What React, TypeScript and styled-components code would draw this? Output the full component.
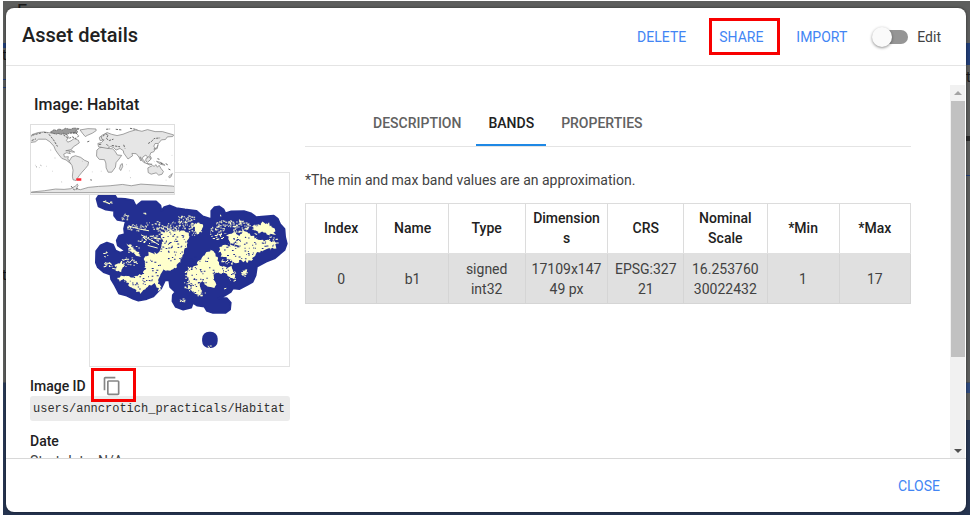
import React, { useState } from "react";
import styled, { createGlobalStyle } from "styled-components";

const GlobalStyle = createGlobalStyle`
  *, *::before, *::after { box-sizing: border-box; }
  html, body, #root { height: 100%; }
  body {
    margin: 0;
    background: #fff;
    color: #424242;
    font-family: Roboto, "Liberation Sans", sans-serif;
    font-size: 14px;
    line-height: 20px;
    overflow: hidden;
  }
  button { font-family: inherit; }
`;

const Backdrop = styled.div`
  position: relative;
  height: calc(100% - 1px);
  margin: 1px 0 0 3px;
  padding: 7px 4px 3px 3px;
  overflow: hidden;
  background: linear-gradient(#5d5e5d 0, #5d5e5d 381px, #2b3c58 382px, #263450 100%);
`;

const Behind = styled.span<{ $x: string; $y: number; $color?: string; $size?: number }>`
  position: absolute;
  left: ${(p) => p.$x};
  top: ${(p) => p.$y}px;
  color: ${(p) => p.$color || "#181818"};
  font-size: ${(p) => p.$size || 14}px;
  line-height: 16px;
  white-space: nowrap;
`;

const BehindBar = styled.span<{ $side: "left" | "right"; $y: number; $h: number; $color?: string }>`
  position: absolute;
  ${(p) => p.$side}: 0;
  top: ${(p) => p.$y}px;
  width: 4px;
  height: ${(p) => p.$h}px;
  background: ${(p) => p.$color || "#233f78"};
`;

const Dialog = styled.section`
  position: relative;
  display: flex;
  flex-direction: column;
  height: 100%;
  overflow: hidden;
  background: #fff;
  border-radius: 8px;
  box-shadow: 0 0 3px rgba(0, 0, 0, 0.5);
`;

const Header = styled.header`
  display: flex;
  align-items: center;
  justify-content: space-between;
  flex: none;
  height: 58px;
  padding: 0 25px 0 16px;
  border-bottom: 1px solid #e4e4e4;
`;

const Title = styled.h1`
  margin: 0;
  padding-bottom: 3px;
  color: #212121;
  font-size: 20px;
  font-weight: 500;
  line-height: 28px;
`;

const Actions = styled.div`
  display: flex;
  align-items: center;
  gap: 15px;
`;

const TextButton = styled.button<{ $marked?: boolean }>`
  position: relative;
  padding: 8px 9px;
  border: 0;
  background: none;
  color: #4285f4;
  font-size: 14px;
  line-height: 20px;
  cursor: pointer;
  ${(p) =>
    p.$marked &&
    `&::after {
      content: "";
      position: absolute;
      inset: -1px -8px 0 -1px;
      border: 3px solid #f80000;
    }`}
`;

const SwitchLabel = styled.label`
  display: flex;
  align-items: center;
  gap: 9px;
  margin-left: 1px;
  cursor: pointer;
`;

const Switch = styled.input`
  appearance: none;
  position: relative;
  width: 36px;
  height: 20px;
  margin: 0;
  cursor: pointer;
  &::before {
    content: "";
    position: absolute;
    inset: 3px 0 3px 2px;
    border-radius: 7px;
    background: #959595;
  }
  &::after {
    content: "";
    position: absolute;
    top: 0;
    left: 0;
    width: 20px;
    height: 20px;
    border-radius: 50%;
    background: #fafafa;
    box-shadow: 0 1px 3px rgba(0, 0, 0, 0.45);
  }
  &:checked::before { background: #8ab4f8; }
  &:checked::after { left: 16px; background: #4285f4; }
`;

const Body = styled.div`
  display: flex;
  flex: 1;
  min-height: 0;
  padding-top: 19px;
`;

const Content = styled.div`
  display: grid;
  grid-template-columns: 260px minmax(0, 1fr);
  gap: 15px;
  flex: 1;
  min-width: 0;
  padding: 0 39px 0 24px;
  overflow-y: auto;
  scrollbar-width: none;
`;

const Scrollbar = styled.div`
  display: flex;
  flex-direction: column;
  align-items: center;
  flex: none;
  width: 15px;
  margin-right: 1px;
  background: #f1f1f1;
`;

const ScrollTrack = styled.div`
  flex: 1;
  align-self: stretch;
  padding: 0 0 0 1px;
`;

const ScrollThumb = styled.div`
  height: 75%;
  background: #c1c1c1;
`;

const ScrollArrow = styled.svg`
  display: block;
  flex: none;
  width: 15px;
  height: 16px;
`;

const AssetName = styled.h2`
  margin: 0;
  padding: 10px 4px 9px;
  color: #212121;
  font-size: 16px;
  font-weight: 500;
  line-height: 20px;
`;

const Thumbnails = styled.div`
  display: grid;
  grid-template-columns: 60px 85px 1fr;
  grid-template-rows: 48px 23px auto;
`;

const WorldFrame = styled.div`
  grid-area: 1 / 1 / 3 / 3;
  z-index: 1;
  border: 1px solid #dedede;
  background: #fff;
  svg { display: block; width: 100%; height: 100%; }
`;

const HabitatFrame = styled.div`
  grid-area: 2 / 2 / 4 / 4;
  height: 195px;
  border: 1px solid #e2e2e2;
  margin-left: -1px;
  svg { display: block; width: 100%; height: 100%; }
`;

const FieldHead = styled.div`
  display: flex;
  align-items: center;
  gap: 16px;
  height: 29px;
  padding-top: 8px;
`;

const FieldTitle = styled.h3`
  margin: 0;
  color: #212121;
  font-size: 14px;
  font-weight: 500;
  line-height: 20px;
`;

const CopyButton = styled.button`
  position: relative;
  width: 20px;
  height: 20px;
  padding: 0;
  border: 0;
  background: none;
  cursor: pointer;
  svg { display: block; }
  &::after {
    content: "";
    position: absolute;
    inset: -8px -14px -6px -11px;
    border: 3px solid #f80000;
  }
`;

const AssetId = styled.code`
  display: block;
  margin-bottom: 10px;
  padding: 3px 3px 2px;
  border-radius: 3px;
  background: #ebebeb;
  color: #303030;
  font-family: "Liberation Mono", monospace;
  font-size: 12px;
  line-height: 20px;
  white-space: nowrap;
`;

const DateLine = styled.p`
  margin: 0;
  padding-bottom: 100px;
`;

const Tabs = styled.div`
  display: flex;
  align-items: flex-end;
  gap: 3px;
  height: 62px;
  padding-left: 56px;
  border-bottom: 1px solid #e4e4e4;
`;

const Tab = styled.button<{ $active?: boolean }>`
  height: 48px;
  padding: 4px 12px 0;
  border: 0;
  border-bottom: 2px solid ${(p) => (p.$active ? "#1e88e5" : "transparent")};
  background: none;
  color: ${(p) => (p.$active ? "#212121" : "#616161")};
  font-size: 14px;
  font-weight: 500;
  line-height: 20px;
  cursor: pointer;
`;

const Note = styled.p`
  margin: 23px 0 13px;
`;

const BandTable = styled.table`
  width: 100%;
  table-layout: fixed;
  border-collapse: collapse;
  text-align: center;
  th, td {
    padding: 5px;
    border: 1px solid #dcdcdc;
    word-break: break-word;
    overflow-wrap: anywhere;
  }
  th {
    padding: 4px 7px 5px;
    color: #212121;
    font-weight: 500;
    border-bottom-color: #e0e0e0;
  }
  td { padding-bottom: 4px; background: #e0e0e0; border-color: #d5d5d5; }
`;

const Column = styled.col<{ $share: number }>`
  width: ${(p) => p.$share}%;
`;

const Footer = styled.footer`
  display: flex;
  align-items: center;
  justify-content: flex-end;
  flex: none;
  height: 54px;
  padding: 0 17px;
  border-top: 1px solid #d8d8d8;
`;

const WorldMap = () => (
  <svg viewBox="30 28 432 209" preserveAspectRatio="none" role="img" aria-label="World map">
    <g fill="#e6e6e6" stroke="#777" strokeWidth="2" strokeLinejoin="round">
      <path d="M33 57l18-6 17-2 28 4 30 1 12 3 6 9-7 8 4 6 10-4 9-7 13 5 3 8-10 7-8 5-5 7-8 7 4 7-11-3-9 4 2 9 12-1-2 7 6 7 8 4 5 3-4 2-10-5-10-8-13-5-10-12-9-13-5-12-12-13-12-8-22 0-10 8-22 3z" />
      <path d="M153 125l11-4 16 5 12 9 12 5-2 10-8 10-10 11-8 10-7 10-3 5-9-2-2-11 2-18-3-14-9-13z" />
      <path d="M178 43l24-4 24 1 1 5-12 8-14 6-7 4-7-8z" />
      <path d="M229 104l8-7 18-3 7 5 14 1 7 6 8 13 13 1-8 11-9 11-2 14-11 15-11 0-6-13-1-15-4-10-16-1-8-10z" />
      <path d="M234 94l-2-10 11-3 8-8-9-2 1-11 17-9 13 5 17 4 18-4 20-8 18-5 19 4 17-5 23 6 22 0 34 10-3 5-16 1-6 8-12 1-9 11-10 0-4 8 5 8-5 9-9 3-3 8 5 9-7 6-5-10-5-6-8 5-7 13-6-12-8-10-13-1 2 7-14 10-13-18-1-7-10-7-12 5-7-7-9-4-10 6z" />
      <path d="M383 158l14-7 6 2 4-5 5 8 5-6 6 10 7 9-4 8-10 3-8-7-15 4-9-5z" />
      <path d="M31 231l40-4 33-5 26 1 20-2 14-8 6-6 2 4-5 10 12 3 24-7 31-3 35-2 37-4 27 4 29-5 47 3 48 3 26 5-14 10 12 5H31z" />
      <path d="M297 160l5-13 4-2 1 9-6 12zM359 124l13 12 4 8-7-4-9-12zM377 130l10-7 5 9-10 9-5-4zM409 138l15 4 11 8-14-3zM378 144l18 3-8 2zM446 184l11-9-4 10-5 3zM135 106l14-3 13 7-8 0-10-4zM239 75l-3-8 4-5 7 12zM401 101l9-4 4-10-3 13z" />
    </g>
    <g fill="#999" stroke="#555" strokeWidth="2" strokeDasharray="6 2">
      <path d="M88 50l12-8 7 3 7-5 11 3 9-5 15 3 10-4 17 2-11 7 7 3-10 5-14-3-9 6-10-4-9 4-8-4-6 3z" />
    </g>
    <path d="M147 53l17-3 10 11-8 8-11-5-9 4M69 50l11 2m177-11l12-1m17 1l18 2m25-5l22 4M247 62l9-7 7 3-5 11 8 6 13-4m-44 16l9-1m14 0l8 8m8-4l12 2 13 2m11-6l4 11M32 75l13-5m0 84l2 1m12-5l2 1M200 79l6-2m3 117l5 1M412 130l6 2m3 11l6 3m10-1l8 5m0 11l6 3M151 213l10 12 12-6M34 59l30-8m20 5l14 17 12 20M384 84l10-6 8-9 18-2M128 58l14 10" fill="none" stroke="#666" strokeWidth="3" strokeDasharray="7 3" />
    <path d="M88 104l3 0m-49 46l2 0m10 7l2 0m20-4l2 0m16 15l2 0m5-40l3 0m110 42l2 0m-32-32l2 0m55 30l2 0m55-18l2 0m18-2l2 0m6 19l2 0m32-34l2 4m17-10l2 4m20 6l2 2m34 56l2 0m16-75l2 0m20 22l2 0M329 187l3 1M121 200l3 1" stroke="#aaa" strokeWidth="2" />
    <path d="M167 193h15" stroke="#ff2531" strokeWidth="7" />
  </svg>
);

const createRandom = (seed: number) => {
  let state = seed;
  return () => {
    state = (state * 16807) % 2147483647;
    return state / 2147483647;
  };
};

/* Breaks each side of a polygon into short steps that wander by up to `sway`. */
const ragged = (points: string, seed: number, sway = 9) => {
  const next = createRandom(seed);
  const corners = points.split(" ").map((pair) => pair.split(",").map(Number));
  const steps = corners.flatMap(([x, y], i) => {
    const [tx, ty] = corners[(i + 1) % corners.length];
    const count = Math.max(1, Math.round(Math.hypot(tx - x, ty - y) / 5));
    return Array.from({ length: count }, (_, k) => {
      const t = k / count;
      const px = Math.round(x + (tx - x) * t + (next() - 0.5) * sway);
      const py = Math.round(y + (ty - y) * t + (next() - 0.5) * sway);
      return `${px},${py}`;
    });
  });
  return steps.join(" ");
};

type Zone = [cx: number, cy: number, rx: number, ry: number, count: number];

/* Scattered pixels of one class inside each elliptical zone. */
const scatter = (zones: Zone[], seed: number) => {
  const next = createRandom(seed);
  return zones
    .map(([cx, cy, rx, ry, count]) =>
      Array.from({ length: count }, () => {
        const angle = next() * Math.PI * 2;
        const reach = Math.sqrt(next());
        const x = Math.round(cx + Math.cos(angle) * rx * reach);
        const y = Math.round(cy + Math.sin(angle) * ry * reach);
        const w = Math.round(2 + next() * 4);
        return `M${x} ${y}h${w}v3h-${w}z`;
      }).join("")
    )
    .join("");
};

const coast =
  "34,100 42,88 88,88 95,99 120,100 144,105 152,122 158,118 170,108 213,108 226,120 229,136 238,125 255,120 274,128 300,132 335,136 354,153 380,161 380,136 390,125 404,123 416,131 422,144 440,138 478,137 500,144 515,155 568,151 580,160 587,176 600,190 602,215 607,235 600,254 570,279 545,289 517,304 513,330 504,350 488,359 465,371 445,369 438,380 420,391 402,399 426,399 438,412 436,433 422,443 385,443 367,437 359,424 338,421 324,412 319,427 295,433 273,425 263,408 264,390 272,380 256,365 253,345 240,345 228,370 219,378 205,393 185,401 160,406 145,401 125,391 102,385 89,360 78,342 76,328 55,320 38,306 32,292 33,257 46,240 65,232 83,238 91,256 105,262 122,257 112,250 98,240 95,225 102,211 119,206 117,190 122,167 97,163 87,150 87,136 62,132 40,122";

const land = [
  "228,202 248,196 270,200 290,196 308,200 312,215 306,238 300,262 286,288 272,306 252,316 236,314 222,330 218,345 228,370 222,376 208,356 190,364 176,374 162,386 152,372 136,364 118,346 96,338 122,330 150,334 170,324 184,316 176,300 178,280 190,264 216,262 228,244 236,226",
  "330,182 342,168 358,182 348,200 334,206",
  "128,234 140,240 150,256 168,266 164,274 142,262",
  "92,296 108,286 120,300 108,320 92,312",
  "312,308 336,300 342,284 360,272 374,252 390,262 398,288 414,300 440,306 452,320 446,338 424,328 402,322 382,330 392,356 386,368 366,360 354,342 344,356 350,384 336,390 320,374 308,366 318,350 308,332",
  "428,212 446,200 462,208 482,196 500,210 522,222 548,226 576,232 576,246 548,254 524,260 506,276 490,290 466,286 446,294 430,280 410,272 404,252 418,238 436,240",
  "504,184 522,184 536,172 554,174 566,186 572,206 556,208 536,200 520,204",
  "470,316 484,310 486,324 478,334",
];

const landSpecks = scatter(
  [
    [67, 108, 13, 5, 7], [118, 153, 13, 10, 10], [155, 185, 30, 11, 32], [205, 178, 32, 16, 22],
    [300, 158, 30, 10, 34], [285, 180, 45, 14, 50], [60, 265, 8, 9, 8], [66, 297, 16, 8, 18],
    [145, 250, 22, 14, 20], [130, 290, 26, 16, 30], [190, 220, 35, 14, 34], [245, 195, 36, 14, 40],
    [330, 190, 22, 20, 36], [420, 172, 30, 10, 30], [398, 200, 24, 22, 55], [465, 182, 30, 20, 65],
    [515, 190, 14, 15, 20], [565, 225, 14, 16, 14], [308, 345, 12, 36, 38], [292, 404, 9, 5, 6],
    [478, 322, 8, 10, 14], [442, 335, 10, 14, 14], [345, 384, 18, 8, 14], [372, 542, 4, 5, 2],
    [180, 142, 5, 3, 3], [115, 338, 20, 10, 20], [435, 286, 26, 9, 26], [404, 148, 4, 5, 2],
  ],
  71
);

const waterSpecks = scatter(
  [
    [265, 240, 40, 50, 55], [190, 310, 35, 42, 24], [165, 350, 34, 22, 18], [345, 310, 46, 48, 40],
    [465, 245, 50, 36, 48], [545, 225, 32, 28, 26], [430, 315, 22, 16, 12], [330, 360, 16, 22, 16],
  ],
  409
);

const HabitatMap = () => (
  <svg viewBox="14 22 600 581" preserveAspectRatio="none" role="img" aria-label="Habitat raster preview">
    <polygon points={coast} fill="#232f91" stroke="#232f91" strokeWidth="6" strokeLinejoin="round" />
    <rect x="352" y="500" width="47" height="49" rx="21" fill="#232f91" />
    <g fill="#ffffcc">
      {land.map((points, i) => (
        <polygon key={points} points={ragged(points, 31 + i * 17)} />
      ))}
    </g>
    <path d="M53 108l10 2 11 5m0-4l8 2M118 147l11 6m-48 156l20 4M285 404q8 8 17 1M370 542l2 5m46-176l7-2M168 208l30 16 24 14M198 212l24 8M132 182l28 8 32 6M188 240l30 8" fill="none" stroke="#ffffcc" strokeWidth="3" />
    <path fill="#ffffcc" d={landSpecks} />
    <path fill="#232f91" d={waterSpecks} />
    <path d="M421 214l15 21 30 9m-46-42l26-6" fill="none" stroke="#232f91" strokeWidth="5" strokeDasharray="12 2" />
  </svg>
);

const bands = [
  { label: "Index", share: 11.8, value: "0" },
  { label: "Name", share: 11.8, value: "b1" },
  { label: "Type", share: 12.7, value: "signed int32" },
  { label: "Dimensions", share: 13.7, value: "17109x14749 px" },
  { label: "CRS", share: 12.5, value: "EPSG:32721" },
  { label: "Nominal Scale", share: 13.8, value: "16.25376030022432" },
  { label: "*Min", share: 11.9, value: "1" },
  { label: "*Max", share: 11.8, value: "17" },
];

const tabs = ["DESCRIPTION", "BANDS", "PROPERTIES"];

export default function App() {
  const [tab, setTab] = useState("BANDS");
  return (
    <>
      <GlobalStyle />
      <Backdrop>
        <div aria-hidden="true">
          <Behind $x="14px" $y={2} $size={18}>E</Behind>
          <BehindBar $side="left" $y={42} $h={5} />
          <Behind $x="-1px" $y={46}>t</Behind>
          <BehindBar $side="left" $y={78} $h={1} />
          <BehindBar $side="left" $y={86} $h={1} />
          <Behind $x="-1px" $y={266}>t</Behind>
          <BehindBar $side="right" $y={42} $h={22} />
          <Behind $x="calc(100% - 4px)" $y={68}>t</Behind>
          <BehindBar $side="right" $y={135} $h={5} $color="#2a2a2a" />
          <BehindBar $side="right" $y={174} $h={1} />
          <BehindBar $side="right" $y={382} $h={10} $color="#304b7d" />
          <BehindBar $side="right" $y={392} $h={27} $color="#5d5e5d" />
        </div>
        <Dialog role="dialog" aria-labelledby="dialog-title">
          <Header>
            <Title id="dialog-title">Asset details</Title>
            <Actions>
              <TextButton type="button">DELETE</TextButton>
              <TextButton type="button" $marked>SHARE</TextButton>
              <TextButton type="button">IMPORT</TextButton>
              <SwitchLabel>
                <Switch type="checkbox" role="switch" />
                Edit
              </SwitchLabel>
            </Actions>
          </Header>
          <Body>
            <Content>
              <div>
                <AssetName>Image: Habitat</AssetName>
                <Thumbnails>
                  <WorldFrame><WorldMap /></WorldFrame>
                  <HabitatFrame><HabitatMap /></HabitatFrame>
                </Thumbnails>
                <FieldHead>
                  <FieldTitle>Image ID</FieldTitle>
                  <CopyButton type="button" aria-label="Copy image ID">
                    <svg width="20" height="20" viewBox="0 0 24 24" fill="#858585">
                      <path d="M16 1H4c-1.1 0-2 .9-2 2v14h2V3h12V1zm3 4H8c-1.1 0-2 .9-2 2v14c0 1.1.9 2 2 2h11c1.1 0 2-.9 2-2V7c0-1.1-.9-2-2-2zm0 16H8V7h11v14z" />
                    </svg>
                  </CopyButton>
                </FieldHead>
                <AssetId>users/anncrotich_practicals/Habitat</AssetId>
                <FieldTitle>Date</FieldTitle>
                <DateLine>Start date: N/A</DateLine>
              </div>
              <div>
                <Tabs role="tablist">
                  {tabs.map((name) => (
                    <Tab
                      key={name}
                      type="button"
                      role="tab"
                      aria-selected={tab === name}
                      $active={tab === name}
                      onClick={() => setTab(name)}
                    >
                      {name}
                    </Tab>
                  ))}
                </Tabs>
                <Note>*The min and max band values are an approximation.</Note>
                <BandTable>
                  <colgroup>
                    {bands.map((b) => <Column key={b.label} $share={b.share} />)}
                  </colgroup>
                  <thead>
                    <tr>{bands.map((b) => <th key={b.label} scope="col">{b.label}</th>)}</tr>
                  </thead>
                  <tbody>
                    <tr>{bands.map((b) => <td key={b.label}>{b.value}</td>)}</tr>
                  </tbody>
                </BandTable>
              </div>
            </Content>
            <Scrollbar aria-hidden="true">
              <ScrollArrow viewBox="0 0 15 16"><path d="M4 10h8L8 6z" fill="#a3a3a3" /></ScrollArrow>
              <ScrollTrack><ScrollThumb /></ScrollTrack>
              <ScrollArrow viewBox="0 0 15 16"><path d="M4 7h8l-4 4z" fill="#505050" /></ScrollArrow>
            </Scrollbar>
          </Body>
          <Footer>
            <TextButton type="button">CLOSE</TextButton>
          </Footer>
        </Dialog>
      </Backdrop>
    </>
  );
}
